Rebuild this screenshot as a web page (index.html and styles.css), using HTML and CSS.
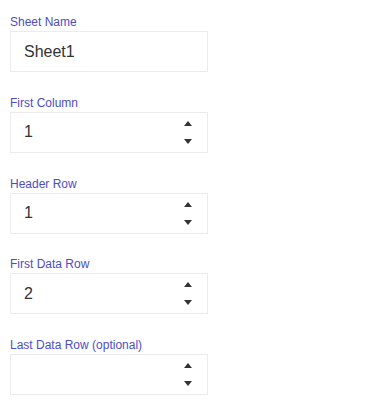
FILE: index.html
```html
<!DOCTYPE html>
<html lang="en">
<head>
  <meta charset="UTF-8">
  <meta name="viewport" content="width=device-width, initial-scale=1.0">
  <title>Sheet Settings</title>
  <link rel="stylesheet" href="styles.css">
</head>
<body>
  <form class="sheet-form">
    <div class="field">
      <label class="field-label">Sheet Name</label>
      <div class="field-box">
        <span class="field-value">Sheet1</span>
      </div>
    </div>

    <div class="field">
      <label class="field-label">First Column</label>
      <div class="field-box">
        <span class="field-value">1</span>
        <div class="spinner">
          <span class="arrow-up"></span>
          <span class="arrow-down"></span>
        </div>
      </div>
    </div>

    <div class="field">
      <label class="field-label">Header Row</label>
      <div class="field-box">
        <span class="field-value">1</span>
        <div class="spinner">
          <span class="arrow-up"></span>
          <span class="arrow-down"></span>
        </div>
      </div>
    </div>

    <div class="field">
      <label class="field-label">First Data Row</label>
      <div class="field-box">
        <span class="field-value">2</span>
        <div class="spinner">
          <span class="arrow-up"></span>
          <span class="arrow-down"></span>
        </div>
      </div>
    </div>

    <div class="field">
      <label class="field-label">Last Data Row (optional)</label>
      <div class="field-box">
        <span class="field-value"></span>
        <div class="spinner">
          <span class="arrow-up"></span>
          <span class="arrow-down"></span>
        </div>
      </div>
    </div>
  </form>
</body>
</html>
```

FILE: styles.css
```css
body {
  font-family: 'Liberation Sans', Arial, sans-serif;
  margin: 0;
  padding: 15px 10px 0;
  background-color: white;
  color: #333;
}
.sheet-form {
  width: 198px;
}
.field {
  margin-bottom: 23.75px;
}
.field-label {
  display: block;
  font-size: 12px;
  line-height: 14px;
  margin-bottom: 2px;
  color: #4d4dc6;
}
.field-box {
  display: flex;
  align-items: center;
  justify-content: space-between;
  box-sizing: border-box;
  height: 41px;
  border: 1px solid #ececec;
  padding: 0 15px 0 13px;
}
.field-value {
  font-size: 16px;
  line-height: 18px;
  color: #333;
}
.spinner {
  display: flex;
  flex-direction: column;
  gap: 13px;
}
.arrow-up,
.arrow-down {
  width: 0;
  height: 0;
  border-left: 4px solid transparent;
  border-right: 4px solid transparent;
}
.arrow-up {
  border-bottom: 5px solid #333;
}
.arrow-down {
  border-top: 5px solid #333;
}
```
